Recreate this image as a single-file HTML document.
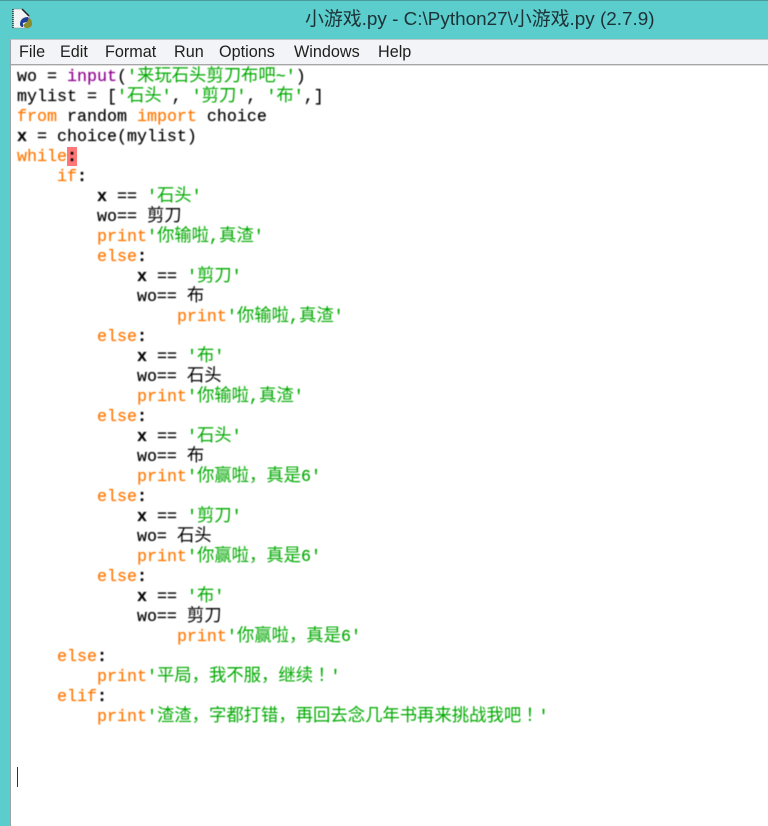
<!DOCTYPE html>
<html><head><meta charset="utf-8">
<style>
html,body{margin:0;padding:0;width:768px;height:826px;overflow:hidden;background:#5bcdcd}
#top{position:absolute;left:0;top:0;width:768px;height:1px;background:#4a9a9c}
#title{position:absolute;left:305px;top:8px;font:18.9px/24px "Liberation Sans","Noto Sans CJK SC",sans-serif;color:#1d3236;white-space:pre;filter:blur(.3px)}
#win{position:absolute;left:10px;top:39px;width:758px;height:787px;background:#fff;border-left:1px solid #9aa4a6;border-top:1px solid #c0c8c8;box-sizing:border-box}
#menu{position:absolute;left:0;top:0;width:757px;height:24px;background:#f3f4f7;border-bottom:1px solid #a6a6a6;box-shadow:0 1px 0 #ddd;font:16.2px/25px "Liberation Sans",sans-serif;color:#1e1e1e;filter:blur(.25px)}
#menu span{position:absolute;top:0}
#hl{position:absolute;left:67px;top:147px;width:10px;height:19px;background:#ff7777}
#code{position:absolute;left:17px;top:68px;font:16.67px/20px "Liberation Mono","Noto Sans CJK SC",monospace;color:#000;filter:blur(.4px);-webkit-text-stroke:.15px currentColor}
#code div{height:20px;white-space:pre}
i{font-style:normal;font-size:17.35px;font-family:"Noto Sans CJK SC",sans-serif;line-height:0;-webkit-text-stroke:0}
u{text-decoration:none;font-family:"Noto Sans CJK TC",sans-serif}
b{font-weight:bold}
.k{color:#ff7700}.s{color:#00aa00}.p{color:#900090}
#caret{position:absolute;left:17px;top:767px;width:1px;height:20px;background:#333}
svg{position:absolute;left:12px;top:8px}
</style></head>
<body>
<div id="top"></div>
<svg width="22" height="22" viewBox="0 0 22 22">
<path d="M1 1H10L17 8V20H1Z" fill="#f4f4f4" stroke="#8a8a8a" stroke-width=".6"/>
<path d="M1 1V20" stroke="#333" stroke-width="1.5" stroke-dasharray="1 1"/>
<path d="M10 1L17 8" stroke="#222" stroke-width="1.5"/>
<path d="M8 16C8 11 12 9 16 9C17 11 17 13 15 14L11 15V19C9 19 8 18 8 16Z" fill="#1f3f9a"/>
<path d="M11 17L15 14L17 10C19 11 20 13 20 16C20 19 17 20 14 20L12 19Z" fill="#8b8b2a"/>
</svg>
<div id="title">小游戏.py - C:\Python27\小游戏.py (2.7.9)</div>
<div id="win"><div id="menu">
<span style="left:8px">File</span><span style="left:49px">Edit</span><span style="left:94px">Format</span><span style="left:163px">Run</span><span style="left:208px">Options</span><span style="left:283px">Windows</span><span style="left:367px">Help</span>
</div></div>
<div id="hl"></div>
<div id="code">
<div>wo = <span class="p">input</span>(<span class="s">'<i>来玩石头剪刀布吧</i>~'</span>)</div>
<div>mylist = [<span class="s">'<i>石头</i>'</span>, <span class="s">'<i>剪刀</i>'</span>, <span class="s">'<i>布</i>'</span>,]</div>
<div><span class="k">from</span> random <span class="k">import</span> choice</div>
<div><b>x</b> = choice(mylist)</div>
<div><span class="k">while</span><b>:</b></div>
<div>    <span class="k">if</span><b>:</b></div>
<div>        <b>x</b> == <span class="s">'<i>石头</i>'</span></div>
<div>        wo== <i>剪刀</i></div>
<div>        <span class="k">print</span><span class="s">'<i>你输啦</i>,<i>真渣</i>'</span></div>
<div>        <span class="k">else</span><b>:</b></div>
<div>            <b>x</b> == <span class="s">'<i>剪刀</i>'</span></div>
<div>            wo== <i>布</i></div>
<div>                <span class="k">print</span><span class="s">'<i>你输啦</i>,<i>真渣</i>'</span></div>
<div>        <span class="k">else</span><b>:</b></div>
<div>            <b>x</b> == <span class="s">'<i>布</i>'</span></div>
<div>            wo== <i>石头</i></div>
<div>            <span class="k">print</span><span class="s">'<i>你输啦</i>,<i>真渣</i>'</span></div>
<div>        <span class="k">else</span><b>:</b></div>
<div>            <b>x</b> == <span class="s">'<i>石头</i>'</span></div>
<div>            wo== <i>布</i></div>
<div>            <span class="k">print</span><span class="s">'<i>你赢啦，真是</i>6'</span></div>
<div>        <span class="k">else</span><b>:</b></div>
<div>            <b>x</b> == <span class="s">'<i>剪刀</i>'</span></div>
<div>            wo= <i>石头</i></div>
<div>            <span class="k">print</span><span class="s">'<i>你赢啦，真是</i>6'</span></div>
<div>        <span class="k">else</span><b>:</b></div>
<div>            <b>x</b> == <span class="s">'<i>布</i>'</span></div>
<div>            wo== <i>剪刀</i></div>
<div>                <span class="k">print</span><span class="s">'<i>你赢啦，真是</i>6'</span></div>
<div>    <span class="k">else</span><b>:</b></div>
<div>        <span class="k">print</span><span class="s">'<i>平局，我不服，继续<u>！</u></i>'</span></div>
<div>    <span class="k">elif</span><b>:</b></div>
<div>        <span class="k">print</span><span class="s">'<i>渣渣，字都打错，再回去念几年书再来挑战我吧<u>！</u></i>'</span></div>
</div>
<div id="caret"></div>
</body></html>
